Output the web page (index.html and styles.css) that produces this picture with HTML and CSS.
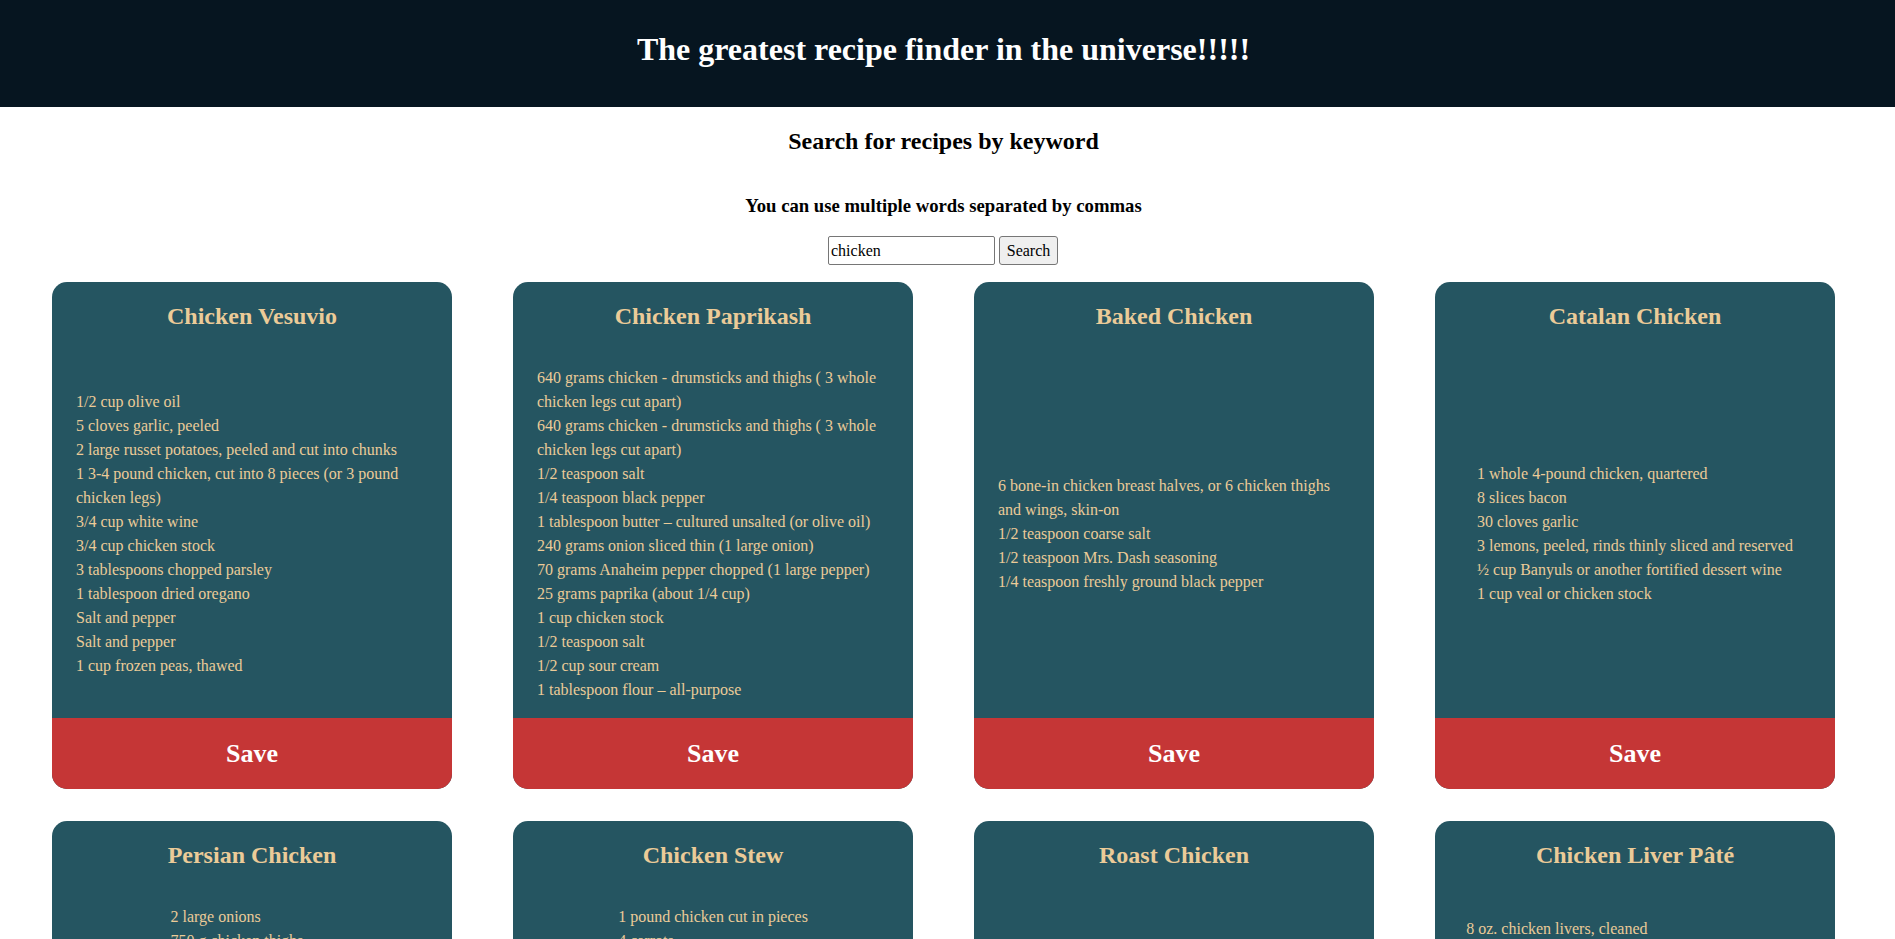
FILE: index.html
```html
<!DOCTYPE html>
<html lang="en">
<head>
<meta charset="utf-8">
<title>Recipe Finder</title>
<link rel="stylesheet" href="styles.css">
</head>
<body>
<header class="top-bar">
  <h1 class="site-title">The greatest recipe finder in the universe!!!!!</h1>
</header>
<main class="page">
  <h2 class="search-title">Search for recipes by keyword</h2>
  <h3 class="search-hint">You can use multiple words separated by commas</h3>
  <form class="search-form">
    <input class="search-input" type="text" value="chicken">
    <button class="search-button" type="button">Search</button>
  </form>
  <section class="cards">
    <article class="card">
      <h2 class="card-title">Chicken Vesuvio</h2>
      <div class="card-body">
        <ul class="ingredients">
          <li>1/2 cup olive oil</li>
          <li>5 cloves garlic, peeled</li>
          <li>2 large russet potatoes, peeled and cut into chunks</li>
          <li>1 3-4 pound chicken, cut into 8 pieces (or 3 pound chicken legs)</li>
          <li>3/4 cup white wine</li>
          <li>3/4 cup chicken stock</li>
          <li>3 tablespoons chopped parsley</li>
          <li>1 tablespoon dried oregano</li>
          <li>Salt and pepper</li>
          <li>Salt and pepper</li>
          <li>1 cup frozen peas, thawed</li>
        </ul>
      </div>
      <div class="save">Save</div>
    </article>
    <article class="card">
      <h2 class="card-title">Chicken Paprikash</h2>
      <div class="card-body">
        <ul class="ingredients">
          <li>640 grams chicken - drumsticks and thighs ( 3 whole chicken legs cut apart)</li>
          <li>640 grams chicken - drumsticks and thighs ( 3 whole chicken legs cut apart)</li>
          <li>1/2 teaspoon salt</li>
          <li>1/4 teaspoon black pepper</li>
          <li>1 tablespoon butter – cultured unsalted (or olive oil)</li>
          <li>240 grams onion sliced thin (1 large onion)</li>
          <li>70 grams Anaheim pepper chopped (1 large pepper)</li>
          <li>25 grams paprika (about 1/4 cup)</li>
          <li>1 cup chicken stock</li>
          <li>1/2 teaspoon salt</li>
          <li>1/2 cup sour cream</li>
          <li>1 tablespoon flour – all-purpose</li>
        </ul>
      </div>
      <div class="save">Save</div>
    </article>
    <article class="card">
      <h2 class="card-title">Baked Chicken</h2>
      <div class="card-body">
        <ul class="ingredients">
          <li>6 bone-in chicken breast halves, or 6 chicken thighs and wings, skin-on</li>
          <li>1/2 teaspoon coarse salt</li>
          <li>1/2 teaspoon Mrs. Dash seasoning</li>
          <li>1/4 teaspoon freshly ground black pepper</li>
        </ul>
      </div>
      <div class="save">Save</div>
    </article>
    <article class="card">
      <h2 class="card-title">Catalan Chicken</h2>
      <div class="card-body">
        <ul class="ingredients">
          <li>1 whole 4-pound chicken, quartered</li>
          <li>8 slices bacon</li>
          <li>30 cloves garlic</li>
          <li>3 lemons, peeled, rinds thinly sliced and reserved</li>
          <li>½ cup Banyuls or another fortified dessert wine</li>
          <li>1 cup veal or chicken stock</li>
        </ul>
      </div>
      <div class="save">Save</div>
    </article>
    <article class="card">
      <h2 class="card-title">Persian Chicken</h2>
      <div class="card-body">
        <ul class="ingredients">
          <li>2 large onions</li>
          <li>750 g chicken thighs</li>
          <li>1 tsp ground turmeric</li>
          <li>1/2 tsp cinnamon</li>
          <li>2 tbsp tomato paste</li>
          <li>2 cups pomegranate juice</li>
          <li>1 cup ground walnuts</li>
          <li>2 tbsp sugar</li>
          <li>1 tsp salt</li>
          <li>1/2 tsp black pepper</li>
          <li>2 tbsp olive oil</li>
          <li>1 cup chicken stock</li>
          <li>1/4 tsp saffron threads</li>
          <li>Fresh parsley to garnish</li>
        </ul>
      </div>
      <div class="save">Save</div>
    </article>
    <article class="card">
      <h2 class="card-title">Chicken Stew</h2>
      <div class="card-body">
        <ul class="ingredients">
          <li>1 pound chicken cut in pieces</li>
          <li>4 carrots</li>
          <li>3 potatoes</li>
          <li>2 onions</li>
          <li>2 stalks celery</li>
          <li>3 cloves garlic</li>
          <li>4 cups chicken broth</li>
          <li>1 can diced tomatoes</li>
          <li>1 teaspoon thyme</li>
          <li>1 bay leaf</li>
          <li>1 teaspoon salt</li>
          <li>1/2 teaspoon pepper</li>
          <li>2 tablespoons flour</li>
          <li>2 tablespoons butter</li>
        </ul>
      </div>
      <div class="save">Save</div>
    </article>
    <article class="card">
      <h2 class="card-title">Roast Chicken</h2>
      <div class="card-body">
        <ul class="ingredients">
          <li>1 whole chicken (4-5 pounds)</li>
          <li>2 tablespoons butter, softened</li>
          <li>1 lemon, halved</li>
          <li>4 cloves garlic</li>
          <li>Fresh thyme sprigs</li>
          <li>1 onion, quartered</li>
          <li>Salt</li>
          <li>Black pepper</li>
        </ul>
      </div>
      <div class="save">Save</div>
    </article>
    <article class="card">
      <h2 class="card-title">Chicken Liver Pâté</h2>
      <div class="card-body">
        <ul class="ingredients">
          <li>8 oz. chicken livers, cleaned</li>
          <li>1/2 cup unsalted butter, softened</li>
          <li>1 small shallot, minced</li>
          <li>1 clove garlic, minced</li>
          <li>2 tablespoons brandy, cognac or fortified sweet wine</li>
          <li>1/2 teaspoon fresh thyme leaves</li>
          <li>1/4 cup heavy cream</li>
          <li>1/4 teaspoon ground allspice</li>
          <li>Salt and pepper</li>
          <li>1 bay leaf</li>
          <li>1/2 cup water</li>
          <li>Toasted baguette slices</li>
          <li>Cornichons, for serving</li>
        </ul>
      </div>
      <div class="save">Save</div>
    </article>
  </section>
</main>
</body>
</html>
```

FILE: styles.css
```css
body {
  margin: 0;
  font-family: "Liberation Serif", "Times New Roman", serif;
  color: #000;
  background: #fff;
}

.top-bar {
  background: #061520;
  height: 107px;
  box-sizing: border-box;
  padding: 31px 8px 0 0;
}

.site-title {
  margin: 0;
  font-size: 32px;
  line-height: 37px;
  color: #fff;
  text-align: center;
}

.page {
  padding-right: 8px;
}

.search-title {
  margin: 20px 0 0;
  font-size: 24px;
  line-height: 28px;
  text-align: center;
}

.search-hint {
  margin: 40px 0 0;
  font-size: 18.72px;
  line-height: 21.5px;
  text-align: center;
}

.search-form {
  margin: 19.5px 0 0;
  display: flex;
  justify-content: center;
  gap: 4px;
  padding-right: 1px;
}

.search-input {
  width: 167px;
  height: 29px;
  box-sizing: border-box;
  border: 1px solid #767676;
  border-radius: 2px;
  padding: 1px 2px;
  font-family: "Liberation Serif", "Times New Roman", serif;
  font-size: 16px;
  color: #000;
  background: #fff;
}

.search-button {
  width: 59px;
  height: 29px;
  box-sizing: border-box;
  border: 1px solid #767676;
  border-radius: 3px;
  background: #efefef;
  padding: 1px 6px;
  font-family: "Liberation Serif", "Times New Roman", serif;
  font-size: 16px;
  color: #000;
}

.cards {
  margin-top: 17px;
  display: flex;
  flex-wrap: wrap;
  justify-content: center;
  column-gap: 61px;
  row-gap: 32px;
}

.card {
  width: 400px;
  height: 507px;
  background: #255561;
  border-radius: 15px;
  overflow: hidden;
  display: flex;
  flex-direction: column;
}

.card-title {
  margin: 21px 0 19px;
  font-size: 24px;
  line-height: 27.6px;
  text-align: center;
  color: #ebcb98;
}

.card-body {
  flex: 1;
  display: flex;
  flex-direction: column;
  justify-content: center;
  align-items: center;
  padding: 0 24px;
  min-height: 0;
}

.ingredients {
  list-style: none;
  margin: 0;
  padding: 0;
  width: fit-content;
  max-width: 352px;
  font-size: 16px;
  line-height: 24px;
  color: #ebcb98;
}

.save {
  height: 71px;
  flex: none;
  background: #c53636;
  color: #fff;
  font-size: 26px;
  font-weight: bold;
  display: flex;
  align-items: center;
  justify-content: center;
}
```
